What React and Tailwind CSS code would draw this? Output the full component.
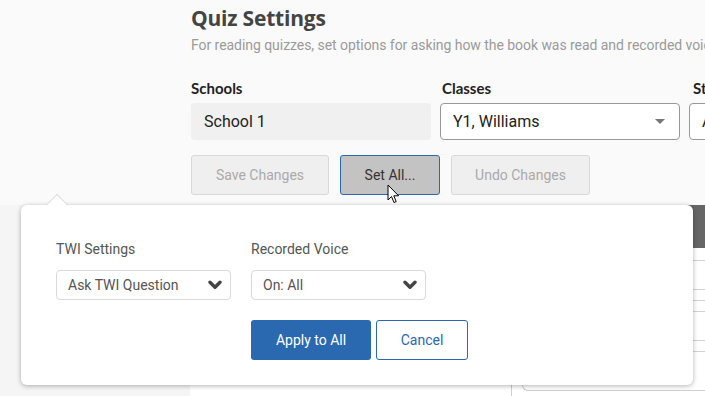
import React from 'react';

function Cursor() {
  return (
    <svg className="absolute left-[387px] top-[184px]" width="14" height="21" viewBox="0 0 14 21">
      <path d="M1 1 L1 16 L4.5 12.5 L7 18.5 L9.2 17.6 L6.8 11.8 L11.6 11.8 Z" fill="#fff" stroke="#000" strokeWidth="1" strokeLinejoin="round" />
    </svg>
  );
}

function Chevron() {
  return (
    <svg width="14" height="10" viewBox="0 0 14 10">
      <path d="M2 2.2 L7 7.2 L12 2.2" fill="none" stroke="#444" strokeWidth="3.4" strokeLinecap="round" strokeLinejoin="round" />
    </svg>
  );
}

function PopSelect({ value }) {
  return (
    <div className="w-[175px] h-[30px] border border-[#d9d9d9] rounded-[4px] bg-white flex items-center justify-between pl-[11px] pr-[8px] text-[14px] text-[#555]">
      <span>{value}</span>
      <Chevron />
    </div>
  );
}

function SetAllPopover() {
  return (
    <div className="absolute left-[21px] top-[205px] w-[672px] h-[180px] bg-white rounded-[6px] shadow-[0_1px_5px_rgba(0,0,0,0.3)] px-[35px] pt-[36px]">
      <div className="absolute left-[28px] -top-[8px] w-[16px] h-[16px] bg-white border-l border-t border-[#dedede] rotate-45" />
      <div className="flex gap-[20px]">
        <div>
          <div className="text-[14px] text-[#555] leading-[16px] mb-[13px]">TWI Settings</div>
          <PopSelect value="Ask TWI Question" />
        </div>
        <div>
          <div className="text-[14px] text-[#555] leading-[16px] mb-[13px]">Recorded Voice</div>
          <PopSelect value="On: All" />
        </div>
      </div>
      <div className="flex gap-[5px] mt-[20px] ml-[195px]">
        <button className="w-[120px] h-[40px] rounded-[3px] bg-[#2a69b0] text-white text-[14px]">Apply to All</button>
        <button className="w-[92px] h-[40px] rounded-[3px] border border-[#2a69b0] bg-white text-[#2a69b0] text-[14px]">Cancel</button>
      </div>
    </div>
  );
}

export default function App() {
  return (
    <div className="relative w-[705px] h-[396px] overflow-hidden bg-[#fafafa] font-['Roboto',sans-serif]">
      <div className="pl-[191px] pt-[4px] h-[205px]">
        <h1 className="font-['Open_Sans',sans-serif] font-bold text-[21px] leading-[28px] text-[#444] tracking-[-0.2px]">Quiz Settings</h1>
        <p className="text-[14px] text-[#9a9a9a] whitespace-nowrap mt-[4px] leading-[18px] tracking-[-0.05px]">
          For reading quizzes, set options for asking how the book was read and recorded voice for each student.
        </p>
        <div className="flex mt-[25px]">
          <div className="w-[249px] shrink-0">
            <div className="font-['Lato',sans-serif] font-bold text-[15px] text-[#222] leading-[18px] mb-[6px]">Schools</div>
            <div className="w-[240px] h-[37px] bg-[#f0f0f0] rounded-[4px] flex items-center pl-[13px] text-[16px] text-[#222]">School 1</div>
          </div>
          <div className="w-[249px] shrink-0">
            <div className="font-['Lato',sans-serif] font-bold text-[15px] text-[#222] leading-[18px] mb-[6px] pl-[2px]">Classes</div>
            <div className="w-[240px] h-[37px] bg-white border border-[#999] rounded-[4px] flex items-center justify-between pl-[12px] pr-[14px] text-[16px] text-[#222]">
              <span>Y1, Williams</span>
              <span className="w-0 h-0 border-l-[5px] border-r-[5px] border-t-[5px] border-l-transparent border-r-transparent border-t-[#777]" />
            </div>
          </div>
          <div className="w-[249px] shrink-0">
            <div className="font-['Lato',sans-serif] font-bold text-[15px] text-[#222] leading-[18px] mb-[6px] pl-[4px]">Students</div>
            <div className="w-[240px] h-[37px] bg-white border border-[#999] rounded-[4px] flex items-center pl-[12px] text-[16px] text-[#222]">All</div>
          </div>
        </div>
        <div className="flex gap-[11px] mt-[15px]">
          <button className="w-[138px] h-[40px] bg-[#efefef] border border-[#d8d8d8] rounded-[3px] text-[14px] text-[#aaa]">Save Changes</button>
          <button className="w-[100px] h-[40px] bg-[#c3c3c3] border border-[#2a69b0] rounded-[3px] text-[14px] text-[#333]">Set All...</button>
          <button className="w-[139px] h-[40px] bg-[#efefef] border border-[#d8d8d8] rounded-[3px] text-[14px] text-[#aaa]">Undo Changes</button>
        </div>
      </div>
      <div className="flex h-[191px]">
        <div className="w-[190px] bg-[#f5f5f5]" />
        <div className="w-[322px] bg-white border-r border-[#cfcfcf]" />
        <div className="flex-1 bg-white pl-[10px]">
          <div className="h-[186px] border-l border-b border-[#cfcfcf] rounded-bl-[6px]">
            <div className="h-[43px] bg-[#666]" />
            <div className="h-[12px]" />
            <div className="h-[29px] border-t border-[#d4d4d4]" />
            <div className="h-[11px] border-t border-[#d4d4d4]" />
            <div className="h-[11px] border-t border-[#d4d4d4]" />
            <div className="h-[29px] border-t border-[#d4d4d4]" />
            <div className="h-[11px] border-t border-[#d4d4d4]" />
            <div className="h-[11px] border-t border-[#d4d4d4]" />
          </div>
        </div>
      </div>
      <SetAllPopover />
      <Cursor />
    </div>
  );
}
